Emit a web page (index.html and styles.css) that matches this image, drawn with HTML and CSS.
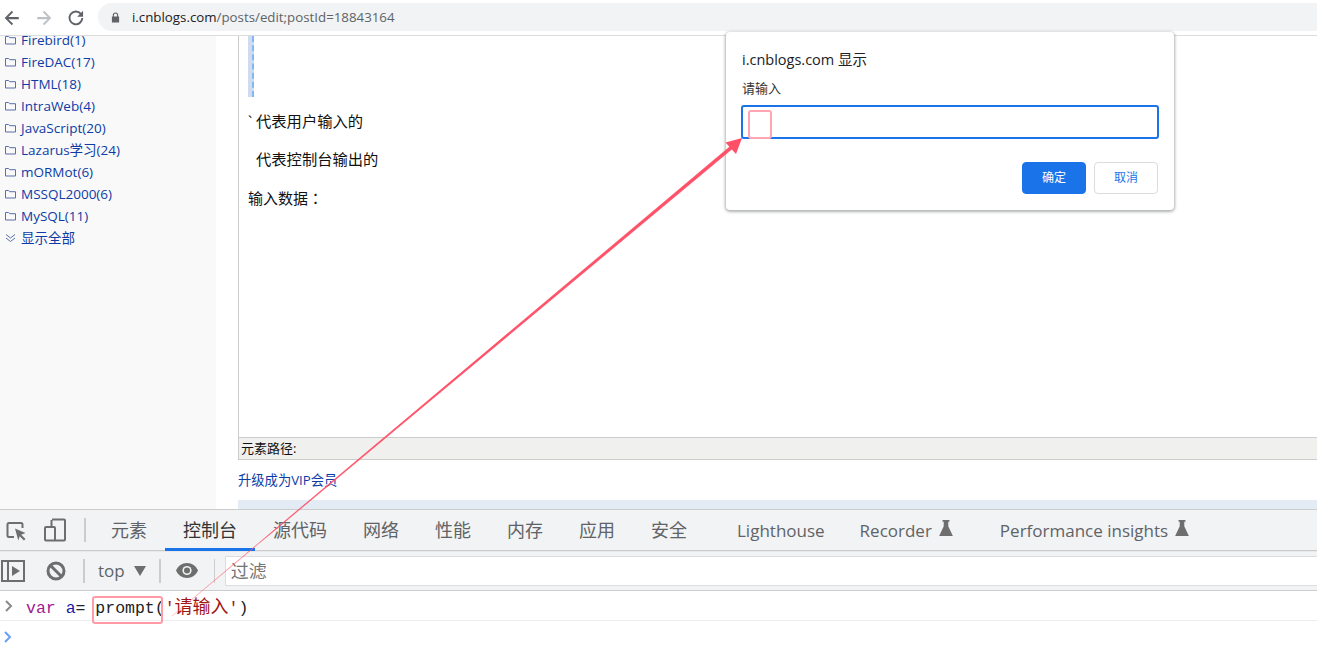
FILE: index.html
```html
<!DOCTYPE html>
<html lang="zh">
<head>
<meta charset="utf-8">
<title>i.cnblogs.com</title>
<link rel="stylesheet" href="styles.css">
</head>
<body>
<header class="toolbar">
  <svg class="nav-icon" viewBox="0 0 16 16"><path d="M14 7H4.800l4.200-4.200L7.800 1.600 1.500 8l6.300 6.400L9 13.200 4.800 9H14z" fill="#5f6368"/></svg>
  <svg class="nav-icon" viewBox="0 0 16 16"><path d="M2 7h9.200L7 2.800l1.200-1.200L14.500 8l-6.300 6.400L7 13.200 11.200 9H2z" fill="#bdc1c6"/></svg>
  <svg class="nav-icon" viewBox="0 0 16 16"><path d="M12.300 4.300A5.700 5.700 0 1 0 13.600 8" fill="none" stroke="#5f6368" stroke-width="1.700"/><path d="M14.300 1.600v5.300H9z" fill="#5f6368"/></svg>
  <div class="omnibox">
    <svg class="lock" viewBox="0 0 10 12"><path d="M2 5V3.400a3 3 0 0 1 6 0V5h1v6.600H1V5zm1.200 0h3.600V3.400a1.800 1.800 0 0 0-3.600 0z" fill="#5f6368"/></svg>
    <span class="url"><span class="host">i.cnblogs.com</span>/posts/edit;postId=18843164</span>
  </div>
</header>

<main class="page">
  <aside class="sidebar">
    <ul class="cats">
      <li class="cat"><svg class="folder" viewBox="0 0 11 10"><path d="M.5 1.500h3.200l1 1.200h5.800v6.300H.5z" fill="none" stroke="#5a6fa8"/></svg><a class="cat-link">Firebird(1)</a></li>
      <li class="cat"><svg class="folder" viewBox="0 0 11 10"><path d="M.5 1.500h3.200l1 1.200h5.800v6.300H.5z" fill="none" stroke="#5a6fa8"/></svg><a class="cat-link">FireDAC(17)</a></li>
      <li class="cat"><svg class="folder" viewBox="0 0 11 10"><path d="M.5 1.500h3.200l1 1.200h5.800v6.300H.5z" fill="none" stroke="#5a6fa8"/></svg><a class="cat-link">HTML(18)</a></li>
      <li class="cat"><svg class="folder" viewBox="0 0 11 10"><path d="M.5 1.500h3.200l1 1.200h5.800v6.300H.5z" fill="none" stroke="#5a6fa8"/></svg><a class="cat-link">IntraWeb(4)</a></li>
      <li class="cat"><svg class="folder" viewBox="0 0 11 10"><path d="M.5 1.500h3.200l1 1.200h5.800v6.300H.5z" fill="none" stroke="#5a6fa8"/></svg><a class="cat-link">JavaScript(20)</a></li>
      <li class="cat"><svg class="folder" viewBox="0 0 11 10"><path d="M.5 1.500h3.200l1 1.200h5.800v6.300H.5z" fill="none" stroke="#5a6fa8"/></svg><a class="cat-link">Lazarus学习(24)</a></li>
      <li class="cat"><svg class="folder" viewBox="0 0 11 10"><path d="M.5 1.500h3.200l1 1.200h5.800v6.300H.5z" fill="none" stroke="#5a6fa8"/></svg><a class="cat-link">mORMot(6)</a></li>
      <li class="cat"><svg class="folder" viewBox="0 0 11 10"><path d="M.5 1.500h3.200l1 1.200h5.800v6.300H.5z" fill="none" stroke="#5a6fa8"/></svg><a class="cat-link">MSSQL2000(6)</a></li>
      <li class="cat"><svg class="folder" viewBox="0 0 11 10"><path d="M.5 1.500h3.200l1 1.200h5.800v6.300H.5z" fill="none" stroke="#5a6fa8"/></svg><a class="cat-link">MySQL(11)</a></li>
      <li class="cat"><svg class="folder" viewBox="0 0 11 10"><path d="M1 1.500 5.500 5 10 1.500M1 5l4.500 3.500L10 5" fill="none" stroke="#5a6fa8"/></svg><a class="cat-link">显示全部</a></li>
    </ul>
  </aside>
  <section class="content">
    <div class="editor">
      <div class="code-block"></div>
      <p class="line first"><span class="tick">`</span>代表用户输入的</p>
      <p class="line second">代表控制台输出的</p>
      <p class="line third">输入数据<span class="colon" lang="zh-Hant">：</span></p>
    </div>
    <div class="pathbar">元素路径:</div>
    <a class="vip">升级成为VIP会员</a>
    <div class="notice"></div>
  </section>
</main>

<section class="devtools">
  <nav class="tabs">
    <svg class="dt-icon" viewBox="0 0 24 24"><path d="M10 19H5a1.500 1.500 0 0 1-1.500-1.500v-11A1.500 1.500 0 0 1 5 5h12a1.500 1.500 0 0 1 1.500 1.500V10" fill="none" stroke="#6e6e6e" stroke-width="2"/><path d="M11 10.500 21.500 15l-4.300 1.700 4.300 4.300-1.600 1.500-4.200-4.200-1.400 4.300z" fill="#6e6e6e"/></svg>
    <svg class="dt-icon device" viewBox="0 0 24 24"><path d="M9 1.500h12a1 1 0 0 1 1 1v19a1 1 0 0 1-1 1H3a1 1 0 0 1-1-1V10a1 1 0 0 1 1-1h8a1 1 0 0 1 1 1v12.500M8.500 9V2" fill="none" stroke="#6e6e6e" stroke-width="2"/></svg>
    <span class="sep"></span>
    <span class="tab first-tab">元素</span>
    <span class="tab active">控制台</span>
    <span class="tab">源代码</span>
    <span class="tab">网络</span>
    <span class="tab">性能</span>
    <span class="tab">内存</span>
    <span class="tab">应用</span>
    <span class="tab">安全</span>
    <span class="tab latin lighthouse">Lighthouse</span>
    <span class="tab latin recorder">Recorder<svg class="flask" viewBox="0 0 12 14"><path d="M3 0h6v1.500H8v4L12 14H0L4 5.500v-4H3z" fill="#6e6e6e"/></svg></span>
    <span class="tab latin insights">Performance insights<svg class="flask" viewBox="0 0 12 14"><path d="M3 0h6v1.500H8v4L12 14H0L4 5.500v-4H3z" fill="#6e6e6e"/></svg></span>
  </nav>
  <div class="filterbar">
    <svg class="side-icon" viewBox="0 0 24 22"><path d="M1 1h22v20H1zM7 1v20" fill="none" stroke="#6e6e6e" stroke-width="2"/><path d="M11 6l8 5-8 5z" fill="#6e6e6e"/></svg>
    <svg class="clear-icon" viewBox="0 0 20 20"><circle cx="10" cy="10" r="8" fill="none" stroke="#6e6e6e" stroke-width="3"/><path d="M4.500 4.500l11 11" stroke="#6e6e6e" stroke-width="3"/></svg>
    <span class="sep s1"></span>
    <span class="ctx">top</span>
    <span class="tri"></span>
    <span class="sep s2"></span>
    <svg class="eye" viewBox="0 0 24 15"><path d="M12 0C7 0 2.800 3.100 1 7.500 2.800 11.900 7 15 12 15s9.200-3.100 11-7.500C21.200 3.100 17 0 12 0z" fill="#6e6e6e"/><circle cx="12" cy="7.500" r="4.600" fill="#f1f3f4"/><circle cx="12" cy="7.500" r="3" fill="#6e6e6e"/></svg>
    <span class="sep s3"></span>
    <div class="filter">过滤</div>
  </div>
  <div class="console-row entered">
    <svg class="chev" viewBox="0 0 8 12"><path d="M1 1l5 5-5 5" fill="none" stroke="#8a8a8a" stroke-width="2"/></svg>
    <code class="code"><span class="kw">var</span> <span class="var">a</span>= prompt(<span class="str">'<span class="str-cjk">请输入</span>'</span>)</code>
  </div>
  <div class="console-row prompt">
    <svg class="chev" viewBox="0 0 8 12"><path d="M1 1l5 5-5 5" fill="none" stroke="#6a9ff5" stroke-width="2"/></svg>
  </div>
</section>

<div class="dialog">
  <div class="dlg-title">i.cnblogs.com 显示</div>
  <div class="dlg-msg">请输入</div>
  <div class="dlg-input"></div>
  <div class="dlg-actions">
    <span class="btn ok">确定</span>
    <span class="btn cancel">取消</span>
  </div>
</div>

<svg class="arrow" viewBox="0 0 1317 653" aria-hidden="true">
  <defs>
    <linearGradient id="shaft" gradientUnits="userSpaceOnUse" x1="172" y1="616" x2="742" y2="138">
      <stop offset="0" stop-color="#ff5068" stop-opacity=".3"/>
      <stop offset=".15" stop-color="#ff5068" stop-opacity=".55"/>
      <stop offset=".18" stop-color="#ff5068"/>
      <stop offset="1" stop-color="#ff5068"/>
    </linearGradient>
  </defs>
  <path d="M172 616 730 146.500 732 149Z" fill="url(#shaft)" stroke="url(#shaft)" stroke-width=".6"/>
  <path d="M742 138 725.500 142.500 736 154Z" fill="#ff5068"/>
</svg>
<div class="mark mark-input"></div>
<div class="mark mark-code"></div>
</body>
</html>
```
FILE: styles.css
```css
* { box-sizing: border-box; }
html, body { margin: 0; height: 100%; }
body {
  width: 1317px;
  height: 653px;
  overflow: hidden;
  display: flex;
  flex-direction: column;
  position: relative;
  background: #fff;
  font-family: "Open Sans", "Noto Sans CJK SC", sans-serif;
}

/* browser toolbar */
.toolbar {
  height: 36px;
  flex: none;
  display: flex;
  align-items: center;
  gap: 14px;
  padding: 0 0 0 3px;
  border-bottom: 1px solid #dadce0;
  background: #fff;
}
.nav-icon { width: 18px; height: 18px; flex: none; }
.omnibox {
  flex: 1;
  height: 28px;
  margin-top: -1px;
  margin-left: -1px;
  border-radius: 14px 0 0 14px;
  background: #f1f3f4;
  display: flex;
  align-items: center;
  padding-left: 13px;
  gap: 12px;
}
.lock { width: 9px; height: 11px; flex: none; }
.url { font-size: 13.300px; color: #5f6368; }
.host { color: #202124; }

/* page */
.page {
  height: 473px;
  flex: none;
  display: flex;
  overflow: hidden;
}
.sidebar {
  width: 216px;
  flex: none;
  background: #f9f9f9;
  overflow: hidden;
}
.cats { list-style: none; margin: -7px 0 0; padding: 0 0 0 5px; }
.cat {
  height: 22px;
  display: flex;
  align-items: center;
  gap: 5px;
  font-size: 13.500px;
  line-height: 22px;
  color: #0d3ca6;
}
.folder { width: 11px; height: 10px; flex: none; }
.content {
  flex: 1;
  margin-left: 22px;
  min-width: 0;
  display: flex;
  flex-direction: column;
}
.editor {
  height: 401px;
  flex: none;
  border-left: 1px solid #ccc;
  padding-left: 9px;
  font-size: 15.300px;
  color: #111;
  overflow: hidden;
}
.code-block {
  width: 6px;
  height: 61px;
  background: #cfdbee;
  border-right: 2px dashed #85b7f5;
}
.line { margin: 0; line-height: 20px; }
.first { margin-top: 14px; }
.tick { display: inline-block; width: 8px; }
.second { margin-top: 18px; padding-left: 8px; }
.third { margin-top: 19px; font-size: 15px; }
.colon { font-family: "Noto Sans CJK TC", sans-serif; }
.pathbar {
  height: 23px;
  flex: none;
  background: #f0f0ee;
  border: 1px solid #ccc;
  border-right: 0;
  padding-left: 2px;
  font-size: 13px;
  line-height: 21px;
  color: #111;
}
.vip {
  margin-top: 10px;
  height: 20px;
  line-height: 20px;
  font-size: 13.300px;
  color: #0d3ca6;
  flex: none;
}
.notice { margin-top: 10px; height: 9px; flex: none; background: #e3ebf5; }

/* devtools */
.devtools {
  flex: 1;
  min-height: 0;
  background: #fff;
  font-family: "Noto Sans CJK SC", "Open Sans", sans-serif;
  color: #5f6368;
}
.tabs {
  height: 42px;
  display: flex;
  align-items: center;
  background: #f1f3f4;
  border-top: 1px solid #ccc;
  border-bottom: 1px solid #ccc;
  font-size: 18px;
  padding-left: 4px;
}
.dt-icon { width: 24px; height: 24px; flex: none; }
.device { margin-left: 15px; }
.sep { width: 2px; height: 24px; background: #ccc; flex: none; }
.tabs .sep { margin-left: 17px; }
.tab {
  flex: none;
  display: flex;
  align-items: center;
  height: 100%;
  padding: 0 18px 2px;
  white-space: nowrap;
  position: relative;
}
.first-tab { margin-left: 7px; }
.active { color: #333; }
.active::after {
  content: "";
  position: absolute;
  left: 0;
  right: 0;
  bottom: -1px;
  height: 3px;
  background: #1a73e8;
}
.latin { font-family: "Open Sans", sans-serif; font-size: 17px; padding: 0; }
.lighthouse { margin-left: 32px; }
.recorder { margin-left: 35px; }
.insights { margin-left: 47px; }
.flask { width: 14px; height: 16px; margin-left: 7px; margin-top: -4px; }
.filterbar {
  height: 40px;
  display: flex;
  align-items: center;
  background: #f1f3f4;
  border-bottom: 1px solid #ccc;
  box-shadow: inset 0 1px 0 #e8e8e8;
  font-size: 18px;
}
.side-icon { width: 24px; height: 22px; margin-left: 1px; flex: none; }
.clear-icon { width: 20px; height: 20px; margin-left: 21px; flex: none; }
.s1 { margin-left: 17px; }
.ctx { margin-left: 13px; font-family: "Open Sans", sans-serif; font-size: 17px; }
.tri {
  margin-left: 9px;
  border-left: 6px solid transparent;
  border-right: 6px solid transparent;
  border-top: 10px solid #6e6e6e;
}
.s2 { margin-left: 13px; }
.eye { width: 24px; height: 15px; margin-left: 14px; flex: none; }
.s3 { margin-left: 15px; width: 1px; }
.filter {
  flex: 1;
  height: 30px;
  margin-left: 10px;
  background: #fff;
  border-left: 1px solid #ddd;
  border-top: 1px solid #ddd;
  border-bottom: 1px solid #ddd;
  padding-left: 5px;
  line-height: 27px;
  color: #757575;
}
.console-row {
  display: flex;
  align-items: center;
  height: 30px;
  padding-left: 5px;
}
.entered { border-bottom: 1px solid #eee; }
.chev { width: 8px; height: 12px; flex: none; margin-top: 1px; }
.prompt { height: 29px; }
.prompt .chev { margin-left: -1px; margin-top: 2px; }
.code {
  margin-left: 13px;
  font-family: "Liberation Mono", "Noto Sans CJK SC", monospace;
  font-size: 16.500px;
  line-height: 30px;
  padding-top: 5px;
  color: #222;
  white-space: pre;
}
.kw { color: #a0208f; }
.var { color: #1a1aa6; }
.str { color: #a31515; }
.str-cjk { font-size: 18px; }

/* js dialog */
.dialog {
  position: absolute;
  left: 726px;
  top: 32px;
  width: 448px;
  height: 178px;
  background: #fff;
  border-radius: 4px;
  box-shadow: 0 1px 3px 1px rgba(60, 64, 67, .4);
  padding: 18px 16px 0;
  font-family: "Noto Sans CJK SC", sans-serif;
}
.dlg-title {
  font-family: "Open Sans", "Noto Sans CJK SC", sans-serif;
  font-size: 14.500px;
  line-height: 20px;
  color: #202124;
}
.dlg-msg { margin-top: 10px; font-size: 13px; line-height: 16px; color: #333; }
.dlg-input {
  margin: 9px -1px 0;
  height: 34px;
  border: 2px solid #1a73e8;
  border-radius: 3px;
}
.dlg-actions { display: flex; justify-content: flex-end; gap: 8px; margin-top: 23px; }
.btn {
  width: 64px;
  height: 32px;
  border-radius: 4px;
  font-size: 12px;
  line-height: 28px;
  text-align: center;
}
.ok { background: #1a73e8; color: #fff; border: 1px solid #1a73e8; }
.cancel { background: #fff; color: #1a73e8; border: 1px solid #dadce0; }

/* annotation layer */
.arrow { position: absolute; left: 0; top: 0; width: 1317px; height: 653px; pointer-events: none; }
.mark { position: absolute; border-radius: 3px; pointer-events: none; }
.mark-input { left: 748px; top: 110px; width: 24px; height: 29px; border: 2px solid #ffa6b2; }
.mark-code { left: 92px; top: 596px; width: 71px; height: 28px; border: 2px solid #ff9aa6; }
```
